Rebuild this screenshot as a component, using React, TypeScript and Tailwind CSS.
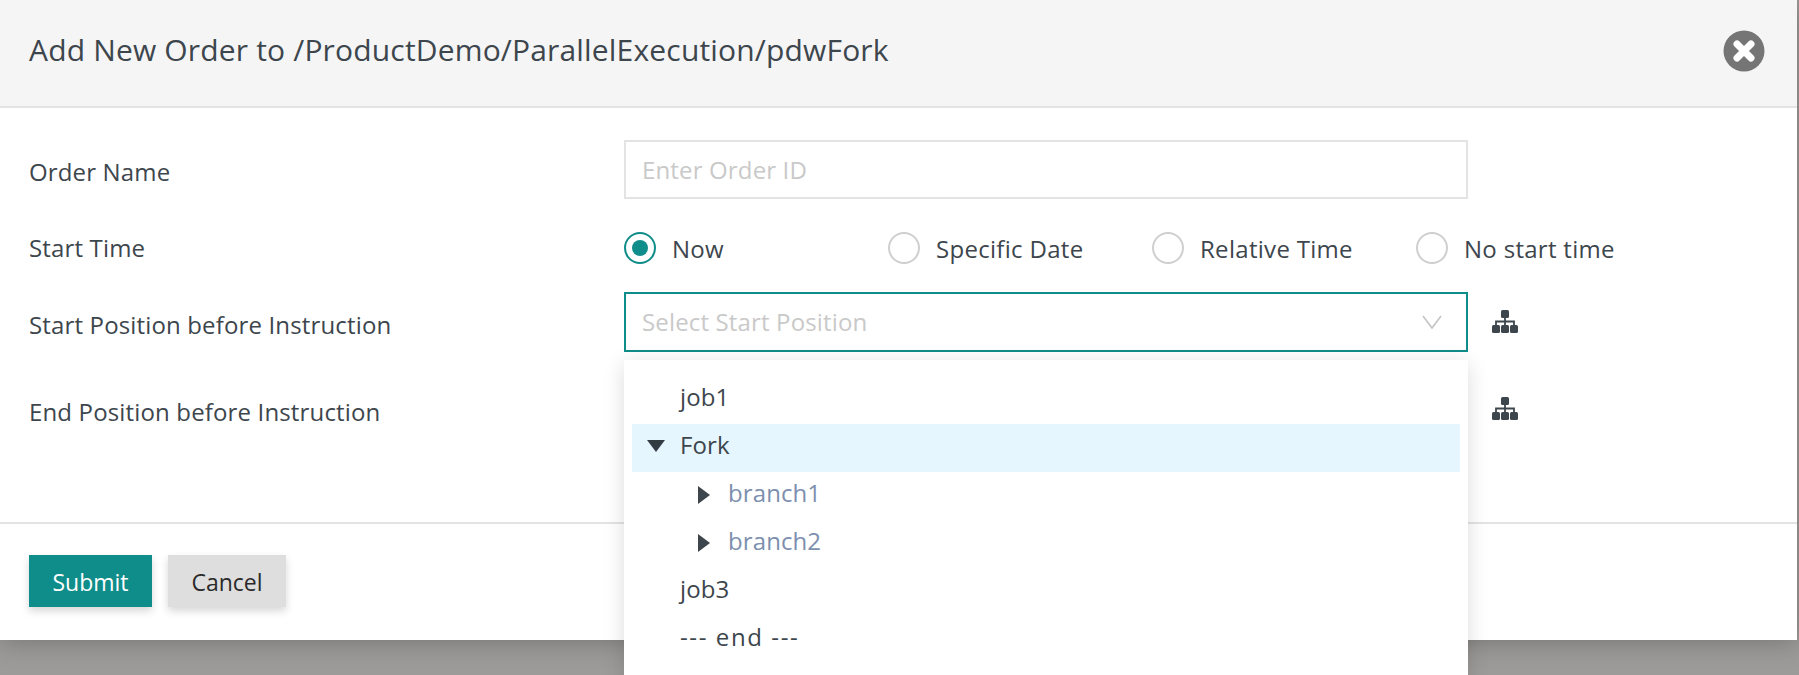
const FONT = "font-['Open_Sans',sans-serif]";

const RADIOS = [
  { label: 'Now', checked: true },
  { label: 'Specific Date', checked: false },
  { label: 'Relative Time', checked: false },
  { label: 'No start time', checked: false },
];

function TreeIcon({ className }: { className?: string }) {
  return (
    <svg className={className} width="26" height="23" viewBox="0 0 26 23" fill="#3d464d">
      <rect x="9" y="0" width="8" height="8" rx="1.5" />
      <rect x="0" y="15" width="8" height="8" rx="1.5" />
      <rect x="9" y="15" width="8" height="8" rx="1.5" />
      <rect x="18" y="15" width="8" height="8" rx="1.5" />
      <path d="M13 8V15M4 15V11.5H22V15" fill="none" stroke="#3d464d" strokeWidth="1.8" />
    </svg>
  );
}

function Radio({ label, checked }: { label: string; checked: boolean }) {
  return (
    <label className="flex w-[264px] shrink-0 items-center gap-[16px]">
      <span
        className={`flex h-[32px] w-[32px] shrink-0 items-center justify-center rounded-full border-2 ${
          checked ? 'border-[#0f8d8a]' : 'border-[#cfcfcf]'
        }`}
      >
        {checked && <span className="h-[16px] w-[16px] rounded-full bg-[#0f8d8a]" />}
      </span>
      <span className="mt-[2px] text-[24px] tracking-[0.3px] text-[#3d464d]">{label}</span>
    </label>
  );
}

function TreeRow({ label, indent, arrow, active, branch, wide }: { label: string; indent: number; arrow?: 'down' | 'right'; active?: boolean; branch?: boolean; wide?: boolean }) {
  return (
    <div className={`relative flex h-[48px] items-center ${active ? 'bg-[#e6f6fe]' : ''}`} style={{ paddingLeft: indent }}>
      {arrow === 'down' && (
        <svg className="absolute left-[15px] top-[16px]" width="18" height="12" viewBox="0 0 18 12">
          <path d="M0 0H18L9 12Z" fill="#333b42" />
        </svg>
      )}
      {arrow === 'right' && (
        <svg className="absolute left-[66px] top-[14px]" width="12" height="18" viewBox="0 0 12 18">
          <path d="M0 0L12 9L0 18Z" fill="#3d464d" />
        </svg>
      )}
      <span className={`-mt-[7px] text-[24px] ${wide ? 'tracking-[1.6px]' : 'tracking-[0.1px]'} ${branch ? 'text-[#7d8fae]' : 'text-[#3d464d]'}`}>{label}</span>
    </div>
  );
}

export default function App() {
  return (
    <div className={`h-[675px] w-[1799px] overflow-hidden bg-[#9c9b9a] ${FONT}`}>
      <div className="relative h-[640px] w-[1797px] bg-white shadow-[0_2px_24px_rgba(0,0,0,0.25)]">
        {/* Header */}
        <div className="flex h-[108px] items-center justify-between border-b-2 border-[#e3e3e3] bg-[#f5f5f5] pl-[29px] pr-[32px]">
          <h4 className="-mt-[8px] text-[30px] tracking-[0.17px] text-[#3d464d]">Add New Order to /ProductDemo/ParallelExecution/pdwFork</h4>
          <svg className="-mt-[4px]" width="42" height="42" viewBox="0 0 42 42">
            <circle cx="21" cy="21" r="20.5" fill="#757575" />
            <path d="M14 14L28 28M28 14L14 28" stroke="#fff" strokeWidth="7" strokeLinecap="round" />
          </svg>
        </div>

        {/* Form */}
        <div className="h-[416px] border-b-2 border-[#e3e3e3] pl-[29px] pt-[32px]">
          <div className="flex h-[59px] items-center">
            <label className="mt-[5px] w-[595px] shrink-0 text-[24px] tracking-[0.15px] text-[#3d464d]">Order Name</label>
            <div className="flex h-[59px] w-[844px] items-center border-2 border-[#e3e3e3] pl-[16px]">
              <span className="mt-[1px] text-[24px] tracking-[0.15px] text-[#c9c9c9]">Enter Order ID</span>
            </div>
          </div>

          <div className="mt-[33px] flex h-[32px] items-center">
            <label className="w-[595px] shrink-0 text-[24px] tracking-[0.15px] text-[#3d464d]">Start Time</label>
            {RADIOS.map((r) => (
              <Radio key={r.label} label={r.label} checked={r.checked} />
            ))}
          </div>

          <div className="mt-[28px] flex h-[60px] items-center">
            <label className="mt-[5px] w-[595px] shrink-0 text-[24px] tracking-[0.15px] text-[#3d464d]">Start Position before Instruction</label>
            <div className="flex h-[60px] w-[844px] items-center justify-between border-2 border-[#0f8d8a] pl-[16px] pr-[24px]">
              <span className="text-[24px] tracking-[0.15px] text-[#c9c9c9]">Select Start Position</span>
              <svg width="20" height="14" viewBox="0 0 20 14">
                <path d="M1 1L10 13L19 1" fill="none" stroke="#c4c4c4" strokeWidth="1.6" />
              </svg>
            </div>
            <TreeIcon className="mb-[1px] ml-[24px]" />
          </div>

          <div className="mt-[28px] flex h-[59px] items-center">
            <label className="mt-[4px] w-[595px] shrink-0 text-[24px] tracking-[0.15px] text-[#3d464d]">End Position before Instruction</label>
            <div className="h-[59px] w-[844px]" />
            <TreeIcon className="mb-[2px] ml-[24px]" />
          </div>
        </div>

        {/* Footer */}
        <div className="flex gap-[16px] pl-[29px] pt-[31px]">
          <button className="h-[52px] w-[123px] bg-[#0f8d8a] pt-[3px] text-[23px] text-white shadow-[0_4px_8px_rgba(0,0,0,0.16)]">Submit</button>
          <button className="h-[52px] w-[118px] bg-[#dedede] pt-[3px] text-[23px] text-[#2a2a2a] shadow-[0_4px_8px_rgba(0,0,0,0.16)]">Cancel</button>
        </div>

        {/* Dropdown tree */}
        <div className="absolute left-[624px] top-[360px] h-[320px] w-[844px] bg-white px-[8px] pt-[16px] shadow-[0_4px_20px_rgba(0,0,0,0.14)]">
          <TreeRow label="job1" indent={48} />
          <TreeRow label="Fork" indent={48} arrow="down" active />
          <TreeRow label="branch1" indent={96} arrow="right" branch />
          <TreeRow label="branch2" indent={96} arrow="right" branch />
          <TreeRow label="job3" indent={48} />
          <TreeRow label="--- end ---" indent={48} wide />
        </div>
      </div>
    </div>
  );
}
